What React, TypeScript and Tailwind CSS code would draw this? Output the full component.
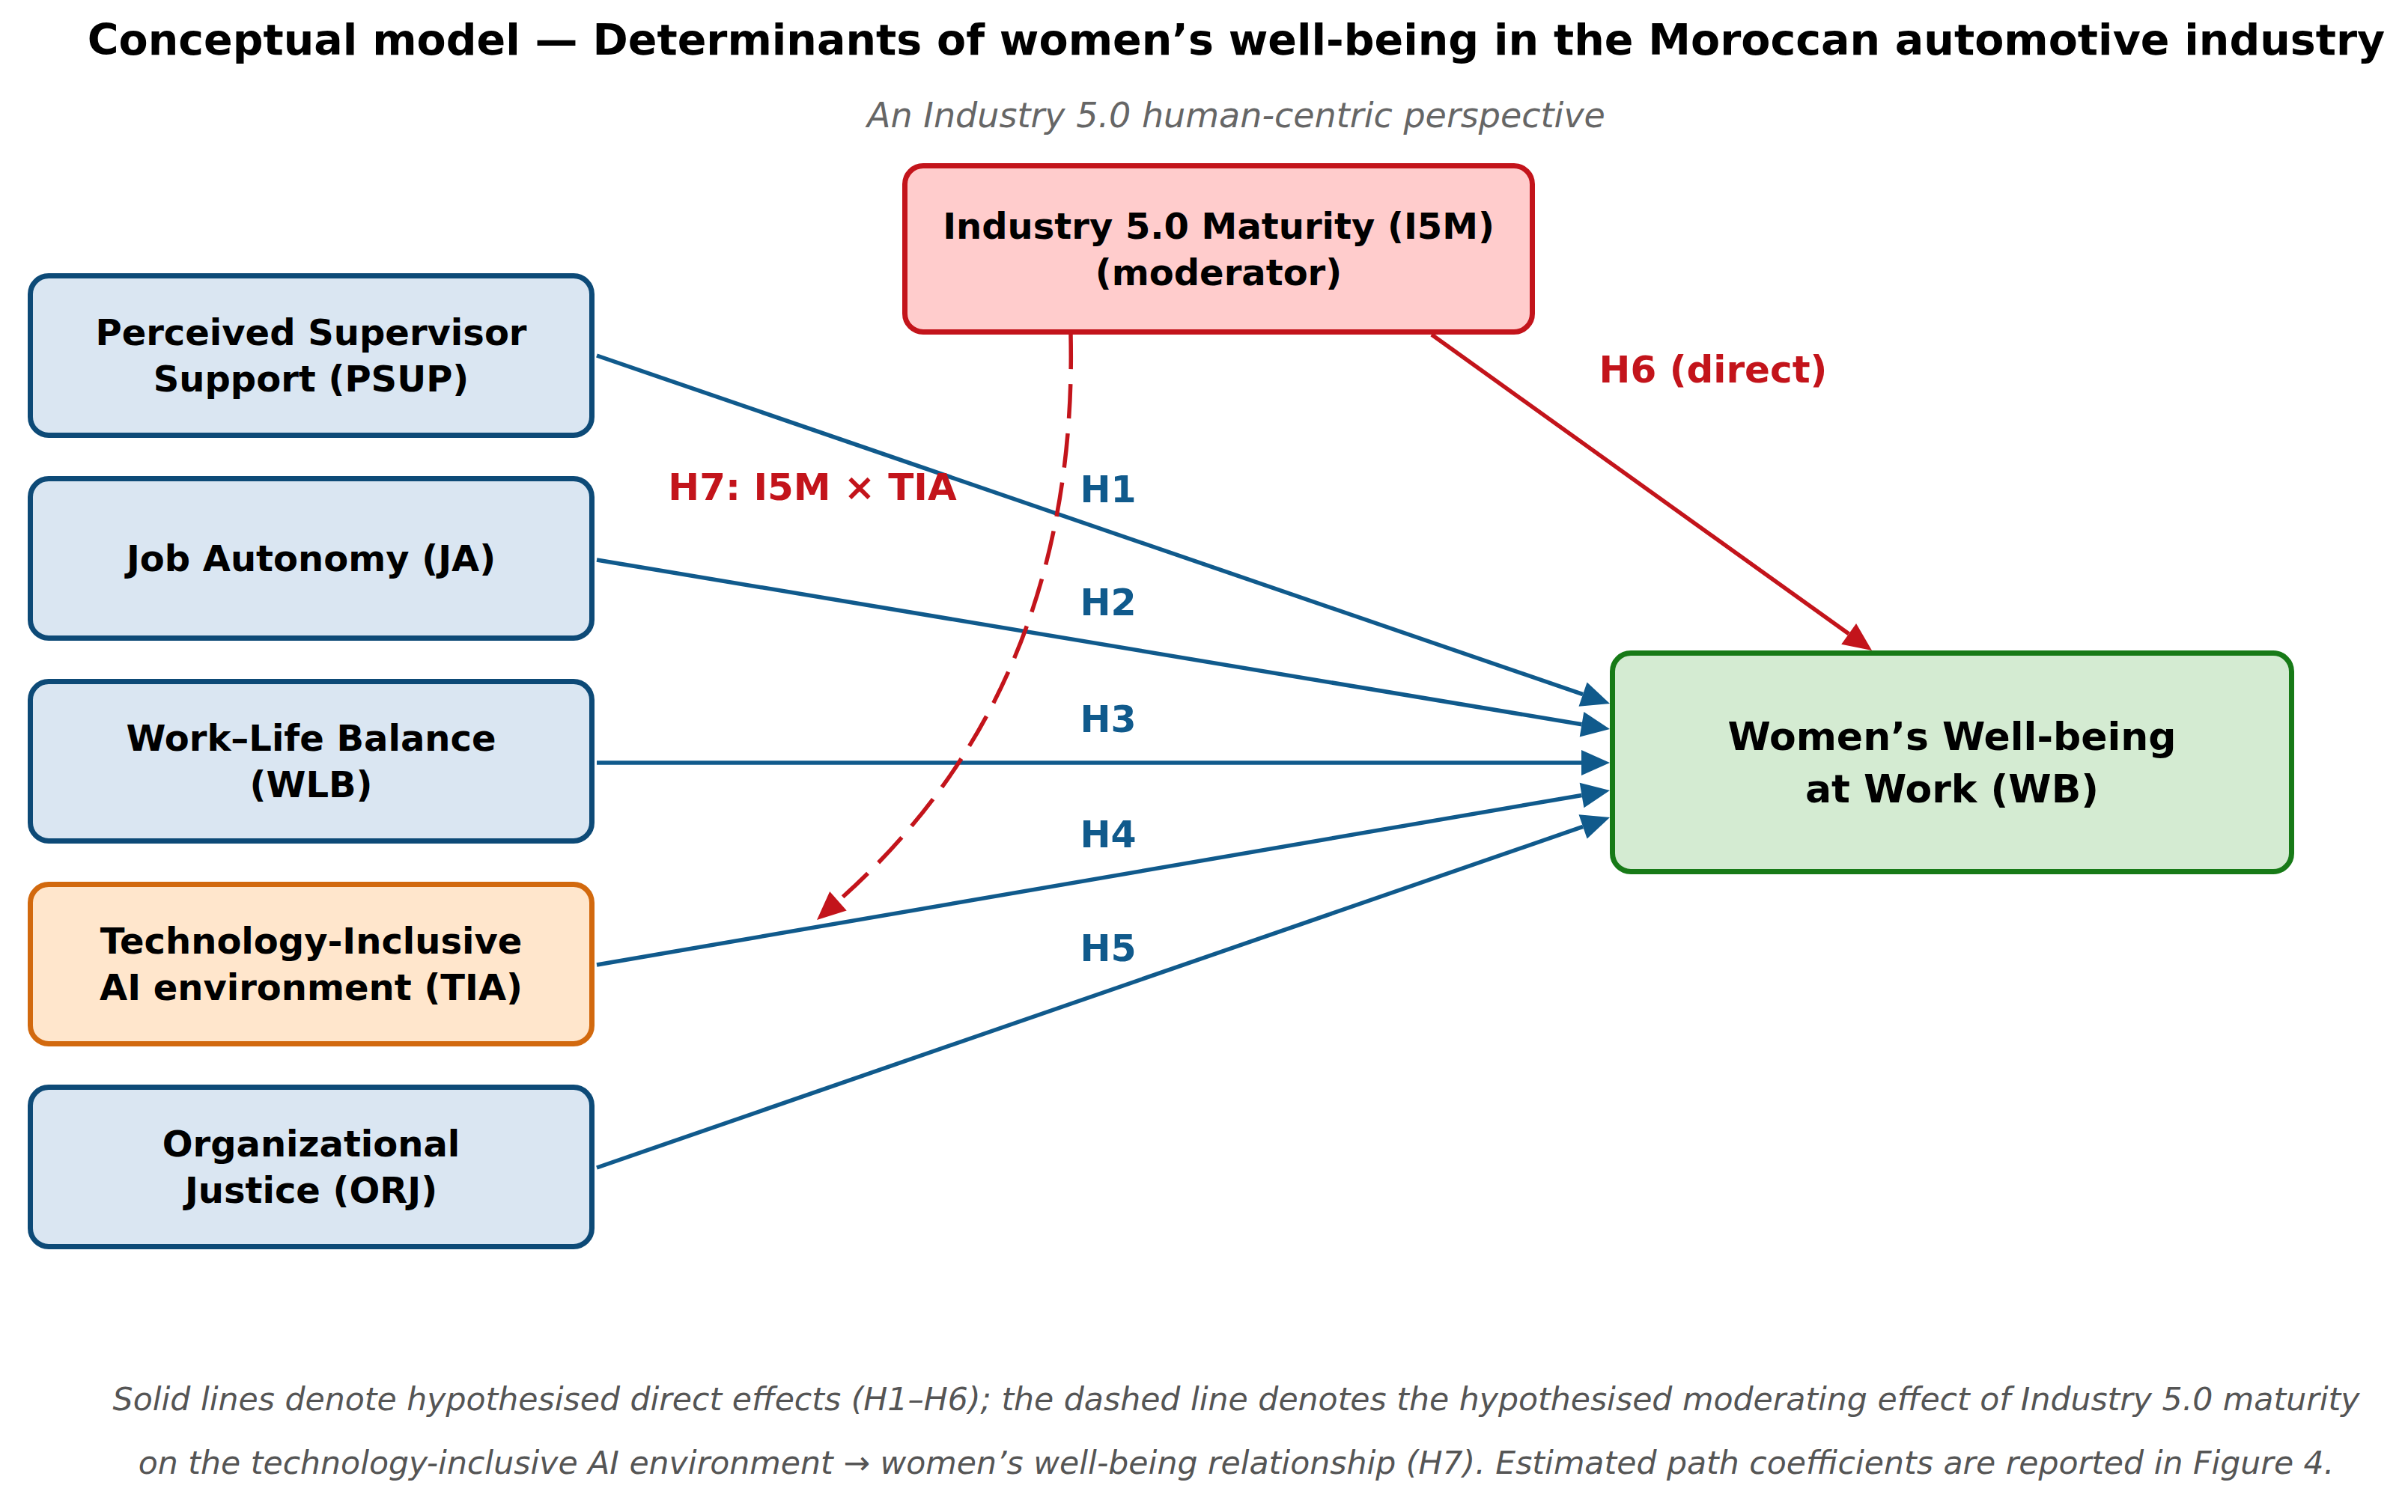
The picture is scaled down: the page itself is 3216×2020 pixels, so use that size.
import React from "react";

type Pt = [number, number];

const BLUE = "#105a8c";
const RED = "#c3141b";

// canvas spans page y 200..1800, svg uses page coordinates
const CANVAS_TOP = 200;

function head(tip: Pt, from: Pt, len = 38, half = 17) {
  const dx = tip[0] - from[0];
  const dy = tip[1] - from[1];
  const d = Math.hypot(dx, dy);
  const ux = dx / d;
  const uy = dy / d;
  const bx = tip[0] - ux * len;
  const by = tip[1] - uy * len;
  const pts = [
    [tip[0], tip[1]],
    [bx - uy * half, by + ux * half],
    [bx + uy * half, by - ux * half],
  ];
  return { points: pts.map((p) => p.join(",")).join(" "), base: [bx, by] as Pt };
}

function Arrow({ from, to, color }: { from: Pt; to: Pt; color: string }) {
  const h = head(to, from);
  return (
    <g>
      <line x1={from[0]} y1={from[1]} x2={h.base[0]} y2={h.base[1]} stroke={color} strokeWidth={5.5} />
      <polygon points={h.points} fill={color} />
    </g>
  );
}

const direct: { from: Pt; to: Pt }[] = [
  { from: [797, 475], to: [2150, 940] },
  { from: [797, 748], to: [2150, 974] },
  { from: [797, 1019], to: [2150, 1019] },
  { from: [797, 1289], to: [2150, 1056] },
  { from: [797, 1560], to: [2150, 1092] },
];

const hLabels = [
  { t: "H1", y: 655 },
  { t: "H2", y: 806 },
  { t: "H3", y: 962 },
  { t: "H4", y: 1116 },
  { t: "H5", y: 1268 },
];

const leftBoxes = [
  { lines: ["Perceived Supervisor", "Support (PSUP)"], tone: "blue" },
  { lines: ["Job Autonomy (JA)"], tone: "blue" },
  { lines: ["Work–Life Balance", "(WLB)"], tone: "blue" },
  { lines: ["Technology-Inclusive", "AI environment (TIA)"], tone: "orange" },
  { lines: ["Organizational", "Justice (ORJ)"], tone: "blue" },
];

function Diagram() {
  const h7 = head([1091, 1229], [1440, 920]);
  return (
    <div className="relative h-[1600px] w-full">
      <svg className="absolute inset-0 h-full w-full" viewBox={`0 ${CANVAS_TOP} 3216 1600`}>
        {direct.map((a, i) => (
          <Arrow key={i} from={a.from} to={a.to} color={BLUE} />
        ))}
        <Arrow from={[1912, 447]} to={[2500, 869]} color={RED} />
        <path
          d={`M1430 447 Q1440 920 ${h7.base[0]} ${h7.base[1]}`}
          fill="none"
          stroke={RED}
          strokeWidth={5.5}
          strokeDasharray="46 20"
        />
        <polygon points={h7.points} fill={RED} />
      </svg>

      {/* left column of determinants */}
      <div className="absolute left-[37px] top-[165px] flex w-[757px] flex-col gap-[51px]">
        {leftBoxes.map((b) => (
          <div
            key={b.lines[0]}
            className={
              b.tone === "orange"
                ? "flex h-[220px] flex-col items-center justify-center rounded-[28px] border-[7px] border-[#d2690e] bg-[#ffe6cc] text-[48px] font-bold leading-[62px] text-black"
                : "flex h-[220px] flex-col items-center justify-center rounded-[28px] border-[7px] border-[#0d4a77] bg-[#dae6f2] text-[48px] font-bold leading-[62px] text-black"
            }
          >
            {b.lines.map((l) => (
              <span key={l}>{l}</span>
            ))}
          </div>
        ))}
      </div>

      {/* moderator */}
      <div className="absolute left-[1205px] top-[18px] flex h-[229px] w-[845px] flex-col items-center justify-center rounded-[28px] border-[7px] border-[#c3141b] bg-[#ffcccc] text-[48px] font-bold leading-[62px] text-black">
        <span>Industry 5.0 Maturity (I5M)</span>
        <span>(moderator)</span>
      </div>

      {/* outcome */}
      <div className="absolute left-[2150px] top-[669px] flex h-[299px] w-[914px] flex-col items-center justify-center rounded-[28px] border-[7px] border-[#177a17] bg-[#d4ebd2] text-[52px] font-bold leading-[70px] text-black">
        <span>Women’s Well-being</span>
        <span>at Work (WB)</span>
      </div>

      {hLabels.map((l) => (
        <div
          key={l.t}
          className="absolute left-[1430px] w-[100px] text-center text-[49px] font-bold leading-[56px] text-[#105a8c]"
          style={{ top: l.y - CANVAS_TOP - 28 }}
        >
          {l.t}
        </div>
      ))}

      <div className="absolute left-[885px] top-[423px] w-[400px] text-center text-[50px] font-bold leading-[56px] text-[#c3141b]">
        H7: I5M × TIA
      </div>
      <div className="absolute left-[2088px] top-[266px] w-[400px] text-center text-[50px] font-bold leading-[56px] text-[#c3141b]">
        H6 (direct)
      </div>
    </div>
  );
}

export default function App() {
  return (
    <div className="flex h-[2020px] w-[3216px] flex-col bg-white pl-[86px] font-['DejaVu_Sans',sans-serif] text-black">
      <h1 className="mt-[21px] text-center text-[57px] font-bold leading-[64px]">
        Conceptual model — Determinants of women’s well-being in the Moroccan automotive industry
      </h1>
      <p className="mt-[39px] text-center text-[46px] italic leading-[60px] text-[#666666]">
        An Industry 5.0 human-centric perspective
      </p>
      <div className="-ml-[86px] mt-[16px]">
        <Diagram />
      </div>
      <div className="mt-[27px] text-center text-[42.6px] italic leading-[85px] text-[#555555]">
        <p>
          Solid lines denote hypothesised direct effects (H1–H6); the dashed line denotes the hypothesised moderating effect of Industry 5.0 maturity
        </p>
        <p>
          on the technology-inclusive AI environment → women’s well-being relationship (H7). Estimated path coefficients are reported in Figure 4.
        </p>
      </div>
    </div>
  );
}
